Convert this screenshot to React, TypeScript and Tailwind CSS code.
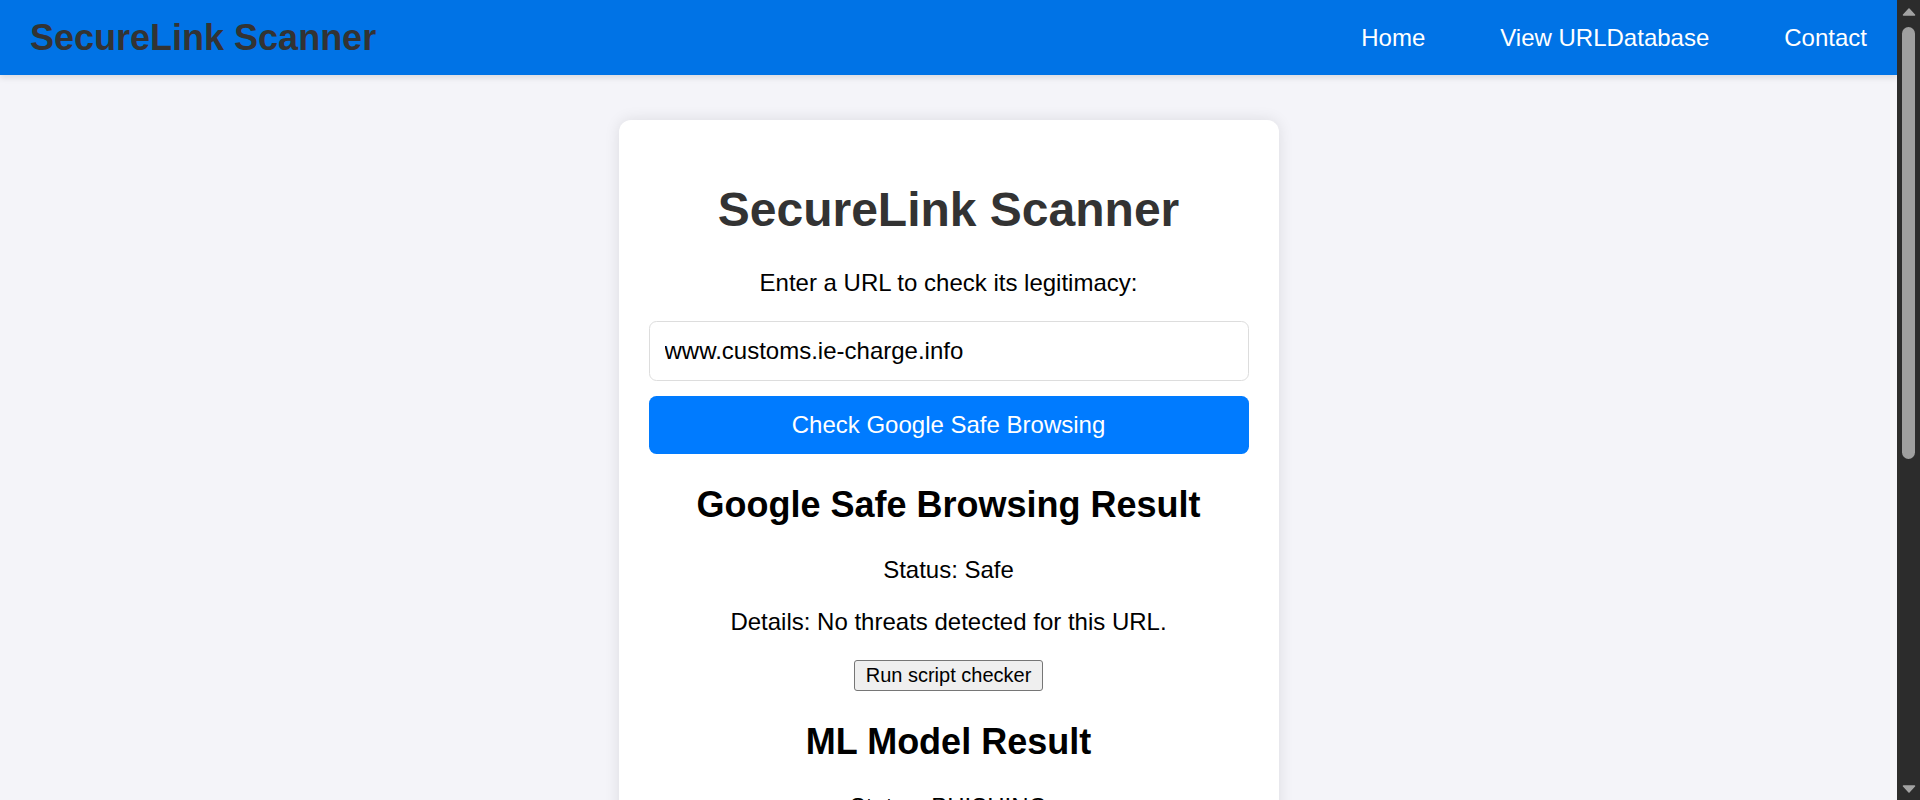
import React from "react";

function ScrollArrow({ down }: { down?: boolean }) {
  return (
    <div className="flex h-[23px] items-center justify-center">
      <svg width="14" height="8" viewBox="0 0 14 8">
        {down ? (
          <polygon points="1.5,1 12.5,1 7,7" fill="#a3a3a3" stroke="#a3a3a3" strokeWidth="1.5" strokeLinejoin="round" />
        ) : (
          <polygon points="7,1 12.5,7 1.5,7" fill="#a3a3a3" stroke="#a3a3a3" strokeWidth="1.5" strokeLinejoin="round" />
        )}
      </svg>
    </div>
  );
}

export default function App() {
  return (
    <div className="flex h-screen overflow-hidden bg-[#f4f4f9] font-['Liberation_Sans',Arial,sans-serif] leading-[normal] text-black">
      <div className="min-w-0 flex-1 overflow-hidden">
        <header className="relative z-10 flex h-[75px] items-center justify-between bg-[#0073e6] px-[30px] shadow-[0_3px_6px_rgba(0,0,0,0.1)]">
          <div className="text-[36px] font-bold text-[#333]">SecureLink Scanner</div>
          <nav className="flex items-center gap-[75px] text-[24px] text-white">
            <a href="#">Home</a>
            <a href="#">View URLDatabase</a>
            <a href="#">Contact</a>
          </nav>
        </header>

        <main className="pt-[45px] pb-[45px]">
          <div className="mx-auto min-h-[1231px] w-[660px] rounded-[12px] bg-white p-[30px] text-center text-[24px] shadow-[0_0_15px_rgba(0,0,0,0.1)]">
            <h1 className="my-[32px] text-[48px] font-bold text-[#333]">SecureLink Scanner</h1>
            <p className="my-[24px]">Enter a URL to check its legitimacy:</p>
            <input
              type="text"
              defaultValue="www.customs.ie-charge.info"
              className="my-[15px] block w-full rounded-[7.5px] border-[1.5px] border-solid border-[#ddd] bg-white px-[15px] py-[15px] text-[24px] text-black outline-none"
            />
            <button className="my-[15px] block w-full rounded-[7.5px] bg-[#007bff] py-[15px] text-[24px] text-white">
              Check Google Safe Browsing
            </button>

            <div>
              <h2 className="my-[30px] text-[36px] font-bold">Google Safe Browsing Result</h2>
              <p className="my-[24px]">Status: Safe</p>
              <p className="my-[24px]">Details: No threats detected for this URL.</p>
              <div className="mt-[1px] flex justify-center">
                <button className="rounded-[3px] border-[1.5px] border-solid border-[#767676] bg-[#efefef] px-[10.5px] py-[3px] text-[20px] text-black">
                  Run script checker
                </button>
              </div>
            </div>

            <div>
              <h2 className="my-[30px] text-[36px] font-bold">ML Model Result</h2>
              <p className="my-[24px]">Status: PHISHING</p>
              <p className="my-[24px]">Details: This URL has been classified as a phishing website.</p>
            </div>
          </div>
        </main>
      </div>

      <div className="flex h-screen w-[23px] shrink-0 flex-col bg-[#2c2c2c]">
        <ScrollArrow />
        <div className="mx-[5px] mt-[4px] h-[432px] rounded-full bg-[#9f9f9f]" />
        <div className="flex-1" />
        <ScrollArrow down />
      </div>
    </div>
  );
}
